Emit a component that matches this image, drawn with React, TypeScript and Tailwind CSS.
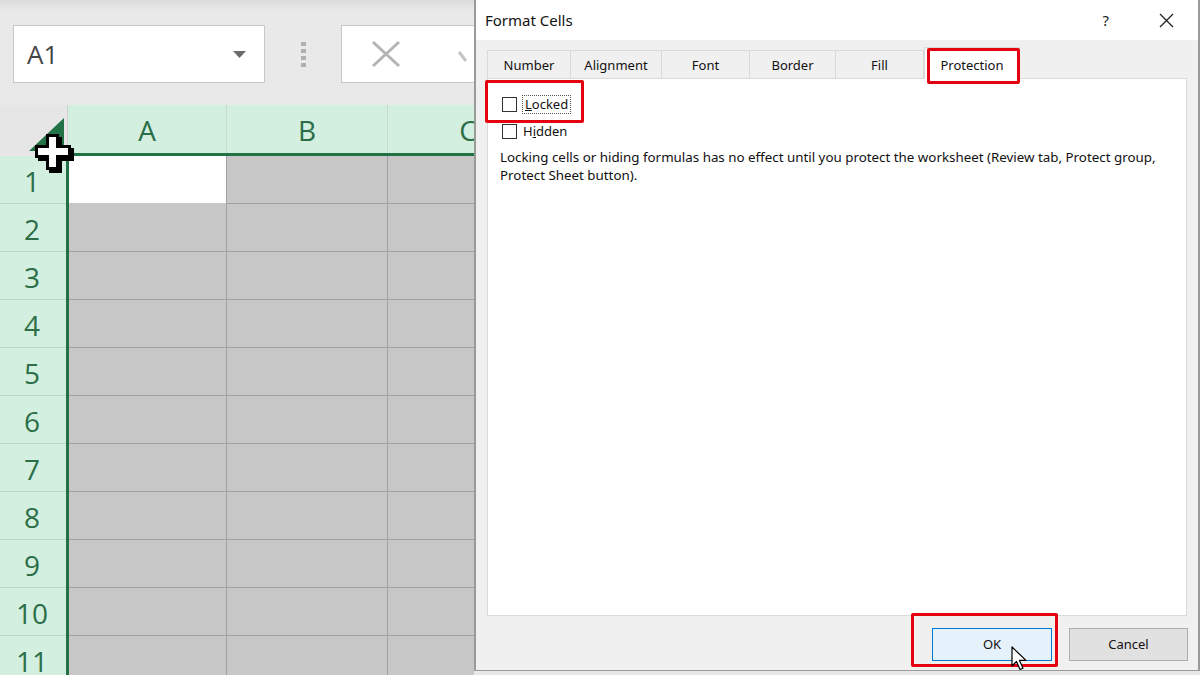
import React from "react";

const ui = { fontFamily: '"Noto Sans", "Open Sans", sans-serif' };
const sheetFont = { fontFamily: '"Open Sans", "Noto Sans", sans-serif' };

const rows = [1, 2, 3, 4, 5, 6, 7, 8, 9, 10, 11];
const tabs = ["Number", "Alignment", "Font", "Border", "Fill"];
const tabWidths = ["w-[84px]", "w-[91px]", "w-[88px]", "w-[86px]", "w-[88px]"];

const SelectAllCursor = () => (
  <svg
    className="absolute left-[32px] top-[131px]"
    width="44"
    height="44"
    viewBox="0 0 44 44"
  >
    <path
      d="M14 3h13v11h12v13H27v12H14V27H3V14h11z"
      fill="#000"
      transform="translate(3 3)"
    />
    <path d="M14 3h13v11h12v13H27v12H14V27H3V14h11z" fill="#000" />
    <path d="M17 6h7v11h12v7H24v12h-7V24H6v-7h11z" fill="#fff" />
  </svg>
);

const Pointer = () => (
  <svg
    className="absolute left-[1011px] top-[646px] z-30"
    width="16"
    height="26"
    viewBox="0 0 16 26"
  >
    <path
      d="M1 1v19l4.5-4.5 3.5 8 3-1.3-3.5-7.8H15z"
      fill="#fff"
      stroke="#000"
      strokeWidth="1.2"
      strokeLinejoin="round"
    />
  </svg>
);

function Spreadsheet() {
  return (
    <div className="flex h-full w-[474px] shrink-0 flex-col overflow-hidden bg-[#e8e8e8]" style={sheetFont}>
      {/* formula bar */}
      <div className="flex h-[105px] shrink-0 items-start bg-gradient-to-b from-[#dcdcdc] from-0% via-[#e9e9e9] via-10% to-[#e9e9e9] pl-[13px] pt-[25px]">
        <div className="flex h-[58px] w-[252px] shrink-0 items-center justify-between border border-[#c8c8c8] bg-white pl-[13px] pr-[18px]">
          <span className="text-[26px] text-[#454545]">A1</span>
          <svg width="13" height="7" viewBox="0 0 13 7">
            <path d="M0 0h13L6.5 7z" fill="#6b6b6b" />
          </svg>
        </div>
        <div className="flex h-[58px] w[76px] w-[76px] shrink-0 flex-col items-center justify-center gap-[3px]">
          {[0, 1, 2, 3].map((i) => (
            <div key={i} className="h-[4px] w-[5px] bg-[#b0b0b0]" />
          ))}
        </div>
        <div className="flex h-[58px] min-w-0 flex-1 items-center border-y border-l border-[#c8c8c8] bg-white pl-[28px]">
          <svg className="shrink-0" width="32" height="28" viewBox="0 0 32 28">
            <path d="M3 2l26 24M29 2L3 26" stroke="#b4b4b4" strokeWidth="3" />
          </svg>
          <svg className="ml-[55px] shrink-0" width="20" height="20" viewBox="0 0 20 20">
            <path d="M2 8l7 9" stroke="#c4c4c4" strokeWidth="3" />
          </svg>
        </div>
      </div>

      {/* column headers */}
      <div className="flex h-[48px] shrink-0">
        <div className="relative w-[68px] shrink-0 border-r border-[#d0d0d0] bg-[#e6e6e6]">
          <svg className="absolute left-[29px] top-[13px]" width="35" height="33" viewBox="0 0 35 33">
            <path d="M0 33h35V0z" fill="#217346" />
          </svg>
        </div>
        {["A", "B", "C"].map((c, i) => (
          <div
            key={c}
            className={`flex shrink-0 items-center justify-center border-r border-[#c9d9cf] bg-[#d3efe0] pt-[2px] text-[28px] text-[#2b6e47] ${i === 0 ? "w-[159px]" : "w-[161px]"}`}
          >
            {c}
          </div>
        ))}
      </div>

      <div className="ml-[66px] h-[3px] shrink-0 bg-[#217346]" />

      {/* rows */}
      {rows.map((r) => (
        <div key={r} className="flex h-[48px] shrink-0">
          <div className="flex w-[66px] shrink-0 items-center justify-center border-b border-[#bfd8c9] bg-[#d3efe0] pr-[2px] pt-[2px] text-[28px] text-[#2b6e47]">
            {r}
          </div>
          <div className="w-[3px] shrink-0 bg-[#217346]" />
          <div
            className={`w-[158px] shrink-0 border-b border-r border-[#a2a2a2] ${r === 1 ? "border-b-[#c6c6c6] bg-white" : "bg-[#c7c7c7]"}`}
          />
          <div className="w-[161px] shrink-0 border-b border-r border-[#a2a2a2] bg-[#c7c7c7]" />
          <div className="w-[161px] shrink-0 border-b border-r border-[#a2a2a2] bg-[#c7c7c7]" />
        </div>
      ))}
    </div>
  );
}

function Dialog() {
  return (
    <div className="flex h-[671px] flex-1 flex-col border-x-2 border-b border-x-[#9a9a9a] border-b-[#9a9a9a] bg-[#f0f0f0]" style={ui}>
      {/* title bar */}
      <div className="flex h-[40px] shrink-0 items-center bg-white pl-[9px] pr-[24px]">
        <span className="text-[15px] text-[#111]">Format Cells</span>
        <span className="ml-auto mr-[50px] text-[15px] text-[#222]">?</span>
        <svg width="15" height="15" viewBox="0 0 15 15">
          <path d="M1 1l13 13M14 1L1 14" stroke="#222" strokeWidth="1.3" />
        </svg>
      </div>

      {/* tabs */}
      <div className="mt-[7px] flex items-end pl-[11px]">
        {tabs.map((t, i) => (
          <div
            key={t}
            className={`flex h-[28px] items-center justify-center border-t border-r border-[#dadada] bg-[#f0f0f0] pt-[3px] text-[13px] text-[#111] ${tabWidths[i]} ${i === 0 ? "border-l" : ""}`}
          >
            {t}
          </div>
        ))}
        <div className="relative z-10 -mb-px flex h-[32px] w-[96px] items-start justify-center border-x border-t border-[#dadada] bg-white pt-[8px] text-[13px] text-[#111]">
          Protection
        </div>
      </div>

      {/* tab page */}
      <div className="mx-[11px] flex h-[538px] flex-col border border-[#dadada] bg-white pl-[14px] pt-[16px] text-[13px] text-[#111]">
        <label className="flex items-center gap-[5px]">
          <span className="h-[15px] w-[15px] border border-[#333] bg-white" />
          <span className="border border-dotted border-[#555] px-[2px] leading-[17px]">
            <span className="underline">L</span>ocked
          </span>
        </label>
        <label className="mt-[9px] flex items-center gap-[6px]">
          <span className="h-[15px] w-[15px] border border-[#333] bg-white" />
          <span className="leading-[17px]">
            H<span className="underline">i</span>dden
          </span>
        </label>
        <p className="-ml-[2px] mt-[8px] w-[680px] text-[13.35px] leading-[18px]">
          Locking cells or hiding formulas has no effect until you protect the worksheet (Review tab, Protect group,
          Protect Sheet button).
        </p>
      </div>

      {/* buttons */}
      <div className="mt-[12px] flex justify-end gap-[17px] pr-[10px]">
        <button className="h-[33px] w-[120px] border border-[#0078d7] bg-[#e5f1fb] text-[13px] text-[#111]">
          OK
        </button>
        <button className="h-[33px] w-[119px] border border-[#adadad] bg-[#e1e1e1] text-[13px] text-[#111]">
          Cancel
        </button>
      </div>
    </div>
  );
}

export default function App() {
  return (
    <div className="relative flex h-[675px] w-[1200px] overflow-hidden bg-[#e8e8e8]">
      <Spreadsheet />
      <Dialog />
      <SelectAllCursor />

      {/* red annotation boxes */}
      <div className="absolute left-[927px] top-[48px] z-20 h-[36px] w-[93px] rounded-[2px] border-[3px] border-[#e4000f]" />
      <div className="absolute left-[485px] top-[80px] z-20 h-[43px] w-[99px] rounded-[2px] border-[3px] border-[#e4000f]" />
      <div className="absolute left-[911px] top-[613px] z-20 h-[54px] w-[147px] rounded-[2px] border-[3px] border-[#e4000f]" />

      <Pointer />
    </div>
  );
}
